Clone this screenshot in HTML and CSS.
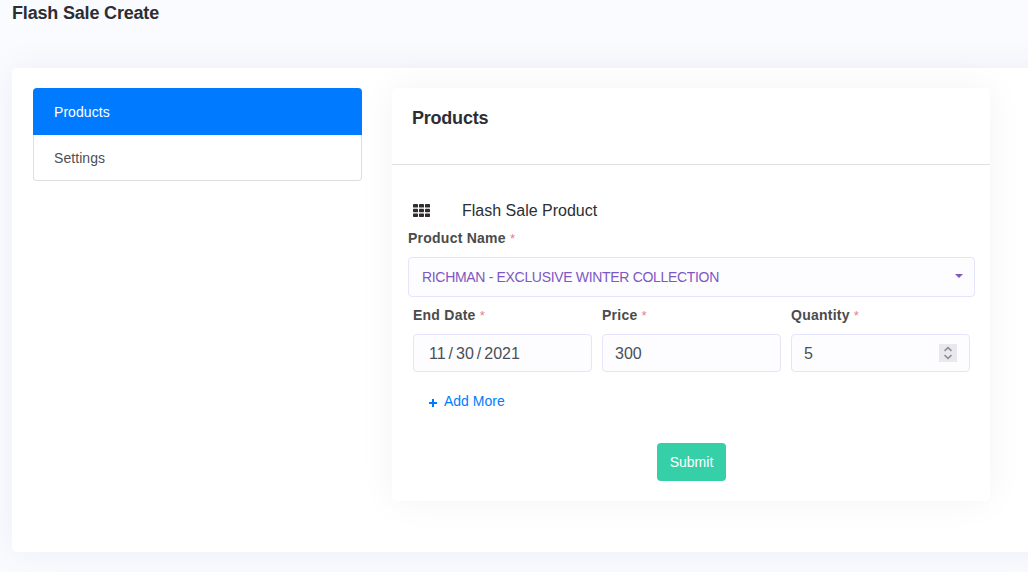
FILE: index.html
```html
<!DOCTYPE html>
<html lang="en">
<head>
<meta charset="utf-8">
<title>Flash Sale Create</title>
<link rel="stylesheet" href="styles.css">
</head>
<body>
<main class="page">
  <h1 class="page-title">Flash Sale Create</h1>
  <section class="panel">
    <nav class="tabs">
      <a class="tab tab-active">Products</a>
      <a class="tab">Settings</a>
    </nav>
    <form class="card">
      <header class="card-header"><h2 class="card-title">Products</h2></header>
      <div class="card-body">
        <div class="item-head">
          <svg class="grid-icon" width="17" height="13" viewBox="0 0 17 13" fill="#302c2f">
            <rect x="0" y="0" width="5" height="3.6" rx=".7"/><rect x="6" y="0" width="5" height="3.6" rx=".7"/><rect x="12" y="0" width="5" height="3.6" rx=".7"/>
            <rect x="0" y="4.7" width="5" height="3.6" rx=".7"/><rect x="6" y="4.7" width="5" height="3.6" rx=".7"/><rect x="12" y="4.7" width="5" height="3.6" rx=".7"/>
            <rect x="0" y="9.4" width="5" height="3.6" rx=".7"/><rect x="6" y="9.4" width="5" height="3.6" rx=".7"/><rect x="12" y="9.4" width="5" height="3.6" rx=".7"/>
          </svg>
          <span class="item-title">Flash Sale Product</span>
        </div>
        <div class="field">
          <label class="label">Product Name <span class="required">*</span></label>
          <div class="control select"><span>RICHMAN - EXCLUSIVE WINTER COLLECTION</span><i class="caret"></i></div>
        </div>
        <div class="columns">
          <div class="field">
            <label class="label">End Date <span class="required">*</span></label>
            <div class="control date"><span>11</span><span>/</span><span>30</span><span>/</span><span>2021</span></div>
          </div>
          <div class="field">
            <label class="label">Price <span class="required">*</span></label>
            <div class="control">300</div>
          </div>
          <div class="field">
            <label class="label">Quantity <span class="required">*</span></label>
            <div class="control number"><span>5</span>
              <svg class="spinner" width="18" height="18" viewBox="0 0 18 18" fill="none" stroke="#8f8f9a" stroke-width="1.6">
                <path d="M5.5 6.8 9 3.6l3.5 3.2M5.5 11.2 9 14.4l3.5-3.2"/>
              </svg>
            </div>
          </div>
        </div>
        <a class="add-more">
          <svg class="plus" width="8" height="8" viewBox="0 0 8 8" stroke="#007bff" stroke-width="2"><path d="M4 0v8M0 4h8"/></svg>
          <span>Add More</span>
        </a>
        <div class="actions"><button class="submit" type="button">Submit</button></div>
      </div>
    </form>
  </section>
</main>
</body>
</html>
```
FILE: styles.css
```css
* { box-sizing: border-box; }
body {
  margin: 0;
  height: 572px;
  overflow: hidden;
  background: #fafbff;
  color: #2c2e33;
  font: 14px/21px "Liberation Sans", Arial, sans-serif;
}
.page { padding-left: 12px; }
.page-title {
  margin: 0 0 42px;
  height: 26px;
  font-size: 18px;
  line-height: 26px;
  letter-spacing: -.18px;
}
.panel {
  display: flex;
  align-items: flex-start;
  gap: 30px;
  width: 1040px;
  height: 484px;
  padding: 20px 21px;
  border-radius: 5px;
  background: #fff;
  box-shadow: 0 0 37px rgba(8, 21, 66, .055);
}
.tabs { width: 329px; }
.tab {
  display: block;
  height: 46px;
  padding: 13px 20px 0;
  border: 1px solid #dddfe1;
  border-top: 0;
  border-radius: 0 0 4px 4px;
  color: #495057;
  letter-spacing: .06px;
}
.tab-active {
  height: 47px;
  padding: 14px 21px 0;
  border: 0;
  border-radius: 4px 4px 0 0;
  background: #007bff;
  color: #fff;
}
.card {
  width: 598px;
  height: 413px;
  border-radius: 5px;
  background: #fff;
  box-shadow: 0 0 37px rgba(0, 0, 0, .05);
}
.card-header {
  height: 77px;
  padding: 17px 20px;
  border-bottom: 1px solid #e0e0e3;
}
.card-title { margin: 0; font-size: 18px; line-height: 26px; letter-spacing: -.22px; }
.card-body { padding: 33px 15px 0 16px; }
.item-head {
  display: flex;
  align-items: center;
  gap: 32px;
  height: 25px;
  padding: 0 0 1px 5px;
}
.item-title { font-size: 16px; }
.label {
  display: block;
  padding-top: 5px;
  height: 34px;
  color: #4b4b4b;
  font-weight: bold;
  letter-spacing: .24px;
}
.required { color: #e5808c; font-size: 13px; font-weight: normal; }
.control {
  display: flex;
  align-items: center;
  height: 38px;
  padding: 0 12px;
  border: 1px solid #e4e4fa;
  border-radius: 4px;
  background: #fdfdff;
  color: #495057;
  font-size: 16px;
}
.select {
  justify-content: space-between;
  height: 40px;
  padding: 0 11px 0 13px;
  color: #7e57c2;
  font-size: 14px;
  letter-spacing: -.32px;
}
.caret {
  margin-top: -3px;
  border: 4px solid transparent;
  border-top-color: #7e57c2;
  border-bottom: 0;
}
.columns {
  display: grid;
  grid-template-columns: repeat(3, 1fr);
  gap: 10px;
  padding: 3px 5px 0;
}
.date { gap: 3px; padding-left: 15px; }
.number { justify-content: space-between; }
.spinner { background: #e8e8ed; }
.add-more {
  display: flex;
  align-items: center;
  gap: 7px;
  margin: 19px 0 0 21px;
  color: #007bff;
}
.plus { margin-top: 3px; }
.actions { display: flex; justify-content: center; padding-top: 31px; }
.submit {
  width: 69px;
  height: 38px;
  padding: 0;
  border: 0;
  border-radius: 4px;
  background: #36d0a8;
  color: #fff;
  font: inherit;
}
```
